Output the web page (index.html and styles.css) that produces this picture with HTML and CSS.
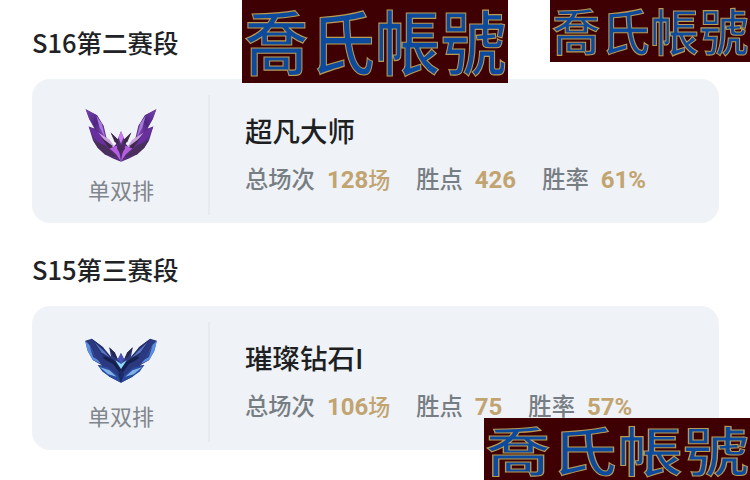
FILE: index.html
```html
<!DOCTYPE html>
<html lang="zh-CN">
<head>
<meta charset="UTF-8">
<meta name="viewport" content="width=device-width, initial-scale=1.0">
<title>历史段位</title>
<link rel="stylesheet" href="styles.css">
</head>
<body>
<svg class="defs" width="0" height="0" aria-hidden="true">
  <defs>
    <linearGradient id="pw" x1="0" y1="0" x2="1" y2="1">
      <stop offset="0" stop-color="#7a45b4"/>
      <stop offset="0.5" stop-color="#4f2484"/>
      <stop offset="1" stop-color="#9a4fd0"/>
    </linearGradient>
    <g id="wing-purple">
      <path d="M78 42 L112 60 L132 92 L140 126 L160 156 L170 146 L153 112 L174 132 L184 108 L184 200 L160 190 L136 178 L114 158 L100 136 L87 94 L104 100 L88 70Z" fill="#55307a"/>
      <path d="M78 42 L112 60 L130 92 L138 128 L108 100 L90 74Z" fill="url(#pw)"/>
      <path d="M110 62 L126 84 L136 126 L120 98Z" fill="#a87bd6"/>
      <path d="M87 94 L118 110 L150 146 L156 168 L122 146 L100 124Z" fill="#6a2f9e"/>
      <path d="M101 136 L136 150 L172 186 L136 178 L114 158Z" fill="#4a2f5c"/>
      <path d="M116 112 L150 134 L170 162 L140 142Z" fill="#c9a4dc"/>
      <path d="M126 128 L156 150 L170 176 L146 158Z" fill="#402a4a"/>
      <path d="M153 112 L174 132 L178 152 L164 138Z" fill="#3e2a48"/>
      <path d="M184 200 L170 178 L150 160 L170 152 L178 164Z" fill="#b45fe0"/>
      <path d="M184 180 L172 160 L176 146 L184 152Z" fill="#4a2a5e"/>
    </g>
    <g id="wing-blue">
      <path d="M76 48 L96 42 L128 66 L156 104 L149 68 L166 84 L176 106 L185 86 L185 176 L150 158 L114 122 L128 124 L100 108 L84 80Z" fill="#2b3a80"/>
      <path d="M76 48 L90 62 L106 96 L124 118 L98 106 L82 76Z" fill="#5d8fe0"/>
      <path d="M88 60 L104 92 L116 108 L100 98Z" fill="#2d3f8c"/>
      <path d="M96 42 L130 68 L154 96 L174 124 L140 110 L118 78Z" fill="#232f6c"/>
      <path d="M104 52 L134 80 L152 100 L126 84Z" fill="#5a78c4"/>
      <path d="M149 68 L166 84 L176 106 L160 94Z" fill="#24284e"/>
      <path d="M114 122 L146 130 L176 154 L185 176 L150 158 L128 142Z" fill="#2a4aa0"/>
      <path d="M128 100 L160 118 L185 152 L185 134 L166 110 L140 96Z" fill="#16204e"/>
      <path d="M185 134 L168 108 L185 118Z" fill="#8fdcf6"/>
      <path d="M120 128 L150 138 L172 158 L146 150Z" fill="#7fb0e6"/>
    </g>
  </defs>
</svg>

<section class="season">
  <h2 class="season-title">S16第二赛段</h2>
  <div class="rank-card">
    <div class="queue">
      <svg class="emblem emblem-master" viewBox="70 36 228 170" aria-hidden="true">
        <use href="#wing-purple"/>
        <use href="#wing-purple" transform="matrix(-1 0 0 1 368 0)"/>
        <path d="M184 108 L192 126 L184 146 L176 126Z" fill="#c77bf0"/>
      </svg>
      <span class="queue-name">单双排</span>
    </div>
    <div class="info">
      <div class="rank-name">超凡大师</div>
      <div class="stats">
        <span class="stat">总场次<b>128<i>场</i></b></span>
        <span class="stat">胜点<b>426</b></span>
        <span class="stat">胜率<b>61%</b></span>
      </div>
    </div>
  </div>
</section>

<section class="season">
  <h2 class="season-title">S15第三赛段</h2>
  <div class="rank-card">
    <div class="queue">
      <svg class="emblem emblem-diamond" viewBox="70 40 230 140" aria-hidden="true">
        <use href="#wing-blue"/>
        <use href="#wing-blue" transform="matrix(-1 0 0 1 370 0)"/>
        <path d="M185 86 L195 104 L185 120 L175 104Z" fill="#4a50b8"/>
        <path d="M185 176 L176 150 L185 136 L194 150Z" fill="#1c2a66"/>
      </svg>
      <span class="queue-name">单双排</span>
    </div>
    <div class="info">
      <div class="rank-name">璀璨钻石I</div>
      <div class="stats">
        <span class="stat">总场次<b>106<i>场</i></b></span>
        <span class="stat">胜点<b>75</b></span>
        <span class="stat">胜率<b>57%</b></span>
      </div>
    </div>
  </div>
</section>

<div class="mark mark-a"><span>喬氏帳號</span></div>
<div class="mark mark-b"><span>喬氏帳號</span></div>
<div class="mark mark-c"><span>喬氏帳號</span></div>
</body>
</html>
```

FILE: styles.css
```css
html, body {
  height: 100%;
}

body {
  margin: 0;
  padding: 27px 31px 0 32px;
  box-sizing: border-box;
  overflow: hidden;
  background: #ffffff;
  font-family: "Noto Sans CJK SC", "Noto Sans", sans-serif;
  position: relative;
}

.defs {
  position: absolute;
}

.season {
  margin-bottom: 31px;
}

.season-title {
  margin: 0 0 18px;
  height: 34px;
  line-height: 30px;
  font-size: 25.5px;
  font-weight: 500;
  color: #202225;
}

.rank-card {
  display: flex;
  height: 144px;
  padding: 16px 0 8px;
  box-sizing: border-box;
  border-radius: 18px;
  background: #eff2f7;
}

.queue {
  width: 178px;
  padding-left: 2px;
  box-sizing: border-box;
  border-right: 2px solid #e7eaef;
  display: flex;
  flex-direction: column;
  align-items: center;
}

.emblem {
  display: block;
  filter: blur(0.4px);
}

.emblem-master {
  width: 76px;
  height: 57px;
  margin-top: 12px;
}

.emblem-diamond {
  width: 76px;
  height: 46px;
  margin-top: 16px;
}

.queue-name {
  margin-top: 10px;
  font-size: 22px;
  line-height: 30px;
  color: #7f868c;
}

.emblem-diamond + .queue-name {
  margin-top: 16px;
}

.info {
  padding-left: 35px;
}

.rank-name {
  margin-top: 15px;
  font-size: 27.5px;
  line-height: 40px;
  font-weight: 500;
  color: #1d1f22;
}

.stats {
  display: flex;
  gap: 26px;
  margin-top: 16px;
  font-size: 23.3px;
  line-height: 24px;
  font-weight: 500;
  color: #777e83;
}

.stat b {
  margin-left: 12px;
  font-family: Roboto, "Noto Sans CJK SC", sans-serif;
  font-weight: 700;
  font-size: 24px;
  color: #c1a470;
}

.stat i {
  font-family: "Noto Sans CJK SC", sans-serif;
  font-style: normal;
  font-weight: 500;
  font-size: 22px;
}

.mark {
  position: absolute;
  display: flex;
  align-items: center;
  justify-content: center;
  background: #3f0004;
}

.mark span {
  display: block;
  white-space: nowrap;
  font-family: "Noto Sans CJK TC", sans-serif;
  font-weight: 500;
  color: #0c4a9e;
  -webkit-text-stroke: 1px #b79a55;
  line-height: 1;
}

.mark-a {
  left: 242px;
  top: 0;
  width: 266px;
  height: 83px;
}

.mark-a span {
  font-size: 62px;
  transform: translateY(-3px) scale(1.06, 1.14);
}

.mark-b {
  left: 550px;
  top: 0;
  width: 200px;
  height: 62px;
}

.mark-b span {
  font-size: 46px;
  transform: translateY(-2px) scale(1.07, 1.08);
}

.mark-c {
  left: 484px;
  top: 418px;
  width: 266px;
  height: 62px;
}

.mark-c span {
  font-size: 50px;
  transform: scale(1.32, 1.06);
}
```
